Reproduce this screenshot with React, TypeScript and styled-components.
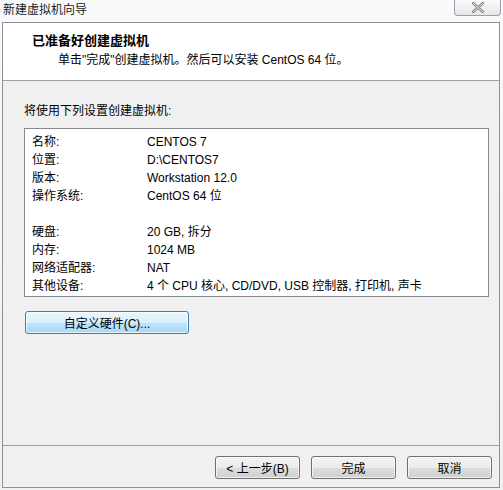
import React from "react";
import styled, { createGlobalStyle } from "styled-components";

const GlobalStyle = createGlobalStyle`
  html, body {
    margin: 0;
    padding: 0;
    background: #f6f7f8;
  }
  body {
    font-family: "Liberation Sans", "Noto Sans CJK SC", sans-serif;
    font-size: 12px;
    color: #000;
  }
`;

const Page = styled.div`
  width: 503px;
  height: 490px;
  display: flex;
  flex-direction: column;
  background: linear-gradient(#f9fafb, #eef0f2);
  overflow: hidden;
`;

const TitleBar = styled.div`
  height: 22px;
  display: flex;
  align-items: flex-start;
  justify-content: space-between;
`;

const Caption = styled.span`
  padding: 3px 0 0 3px;
  font-size: 12px;
  line-height: 14px;
  color: #1a1a1a;
`;

const CloseButton = styled.div`
  width: 45px;
  height: 15px;
  margin-right: 2px;
  border: 1px solid #9a9ea4;
  border-top: none;
  border-radius: 0 0 4px 4px;
  background: linear-gradient(#fbfbfb, #e6e8ea);
  display: flex;
  align-items: center;
  justify-content: center;
`;

const Window = styled.div`
  flex: 1;
  margin: 0 3px 2px 2px;
  border: 1px solid #8d9096;
  display: flex;
  flex-direction: column;
  background: #f0f0f0;
`;

const Header = styled.div`
  height: 58px;
  background: #fff;
  border-bottom: 1px solid #a0a0a0;
  display: flex;
  flex-direction: column;
  padding-top: 10px;
  box-sizing: border-box;
`;

const HeaderTitle = styled.div`
  padding-left: 29px;
  font-size: 13px;
  font-weight: bold;
  line-height: 16px;
`;

const HeaderSub = styled.div`
  padding-left: 55px;
  margin-top: 3px;
  font-size: 12px;
  line-height: 16px;
`;

const Body = styled.div`
  flex: 1;
  display: flex;
  flex-direction: column;
  padding: 22px 10px 0 21px;
`;

const Intro = styled.div`
  line-height: 16px;
  height: 16px;
`;

const ListBox = styled.div`
  margin-top: 9px;
  height: 163px;
  border: 1px solid #828790;
  background: #fff;
  padding: 4px 0 0 7px;
  box-sizing: content-box;
`;

const Row = styled.div`
  display: grid;
  grid-template-columns: 115px 1fr;
  height: 18px;
  line-height: 18px;
  white-space: nowrap;
`;

const Gap = styled.div`
  height: 18px;
`;

const Button = styled.button<{ $accent?: boolean }>`
  font-family: "Liberation Sans", "Noto Sans CJK SC", sans-serif;
  font-size: 12px;
  color: #000;
  height: 23px;
  padding: 0;
  border-radius: 3px;
  border: 1px solid ${(p) => (p.$accent ? "#3c7fb1" : "#707070")};
  background: ${(p) =>
    p.$accent
      ? "linear-gradient(#eaf6fd 0%, #d9f0fc 50%, #bee6fd 51%, #a7d9f5 100%)"
      : "linear-gradient(#f2f2f2 0%, #ebebeb 50%, #dddddd 51%, #cfcfcf 100%)"};
  box-shadow: inset 0 0 0 1px rgba(255, 255, 255, 0.7);
`;

const CustomizeButton = styled(Button)`
  margin: 14px 0 0 1px;
  width: 164px;
`;

const Footer = styled.div`
  height: 42px;
  border-top: 1px solid #a0a0a0;
  display: flex;
  justify-content: flex-end;
  align-items: flex-start;
  gap: 11px;
  padding: 10px 7px 0 0;
  box-sizing: border-box;
`;

const FooterButton = styled(Button)`
  width: 85px;
`;

const rowsTop: [string, string][] = [
  ["名称:", "CENTOS 7"],
  ["位置:", "D:\\CENTOS7"],
  ["版本:", "Workstation 12.0"],
  ["操作系统:", "CentOS 64 位"],
];

const rowsBottom: [string, string][] = [
  ["硬盘:", "20 GB, 拆分"],
  ["内存:", "1024 MB"],
  ["网络适配器:", "NAT"],
  ["其他设备:", "4 个 CPU 核心, CD/DVD, USB 控制器, 打印机, 声卡"],
];

export default function App() {
  return (
    <Page>
      <GlobalStyle />
      <TitleBar>
        <Caption>新建虚拟机向导</Caption>
        <CloseButton>
          <svg width="14" height="11" viewBox="0 0 14 11">
            <path
              d="M2 1 L12 10 M12 1 L2 10"
              stroke="#7a7e84"
              strokeWidth="2.4"
              strokeLinecap="round"
              fill="none"
            />
            <path
              d="M2 1 L12 10 M12 1 L2 10"
              stroke="#fafafa"
              strokeWidth="0.9"
              strokeLinecap="round"
              fill="none"
            />
          </svg>
        </CloseButton>
      </TitleBar>
      <Window>
        <Header>
          <HeaderTitle>已准备好创建虚拟机</HeaderTitle>
          <HeaderSub>单击"完成"创建虚拟机。然后可以安装 CentOS 64 位。</HeaderSub>
        </Header>
        <Body>
          <Intro>将使用下列设置创建虚拟机:</Intro>
          <ListBox>
            {rowsTop.map(([k, v]) => (
              <Row key={k}>
                <span>{k}</span>
                <span>{v}</span>
              </Row>
            ))}
            <Gap />
            {rowsBottom.map(([k, v]) => (
              <Row key={k}>
                <span>{k}</span>
                <span>{v}</span>
              </Row>
            ))}
          </ListBox>
          <div>
            <CustomizeButton $accent>自定义硬件(C)...</CustomizeButton>
          </div>
        </Body>
        <Footer>
          <FooterButton>&lt; 上一步(B)</FooterButton>
          <FooterButton>完成</FooterButton>
          <FooterButton>取消</FooterButton>
        </Footer>
      </Window>
    </Page>
  );
}
